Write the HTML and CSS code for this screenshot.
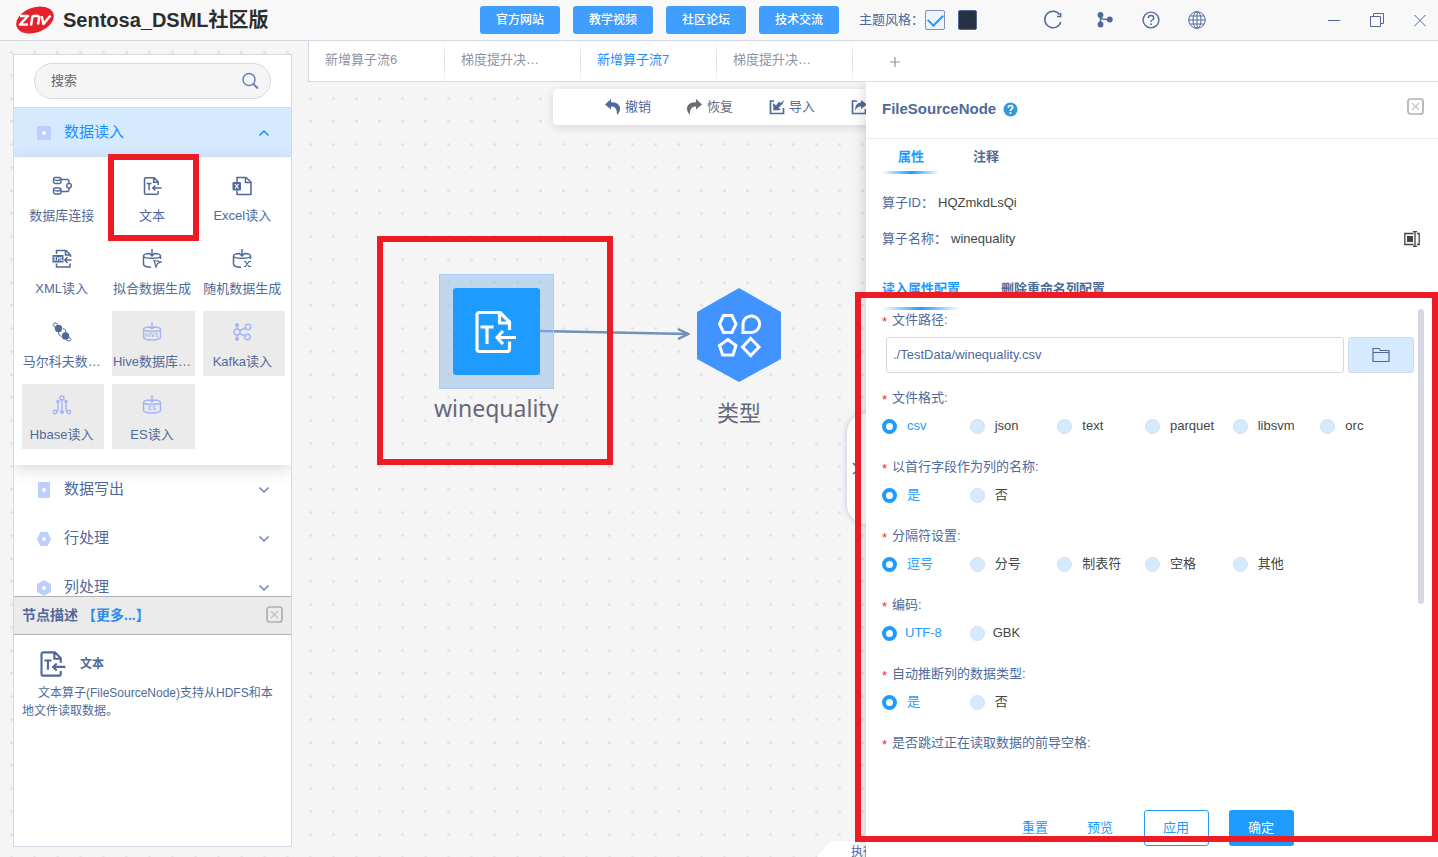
FILE: index.html
```html
<!DOCTYPE html>
<html lang="zh-CN">
<head>
<meta charset="utf-8">
<title>Sentosa_DSML社区版</title>
<link rel="stylesheet" href="styles.css">
</head>
<body>
<svg class="defs" aria-hidden="true">
  <symbol id="file-text" viewBox="0 0 24 24">
    <path d="M19.500 11V7L14.500 2H4.500Q3 2 3 3.500V20.500Q3 22 4.500 22H18Q19.500 22 19.500 20.500V18M14 2V7.500H19.500M5.500 9H11.500M8.500 9V17M23.500 14.500H13M16 11.500L13 14.500L16 17.500" fill="none" stroke="currentColor" stroke-width="1.800"/>
  </symbol>
  <symbol id="chev-down" viewBox="0 0 12 12"><path d="M1.500 3.500L6 8L10.500 3.500" fill="none" stroke="currentColor" stroke-width="1.500"/></symbol>
  <symbol id="box-close" viewBox="0 0 17 17"><rect x="1" y="1" width="15" height="15" rx="2.500" fill="none" stroke="#b0b0b0" stroke-width="1.700"/><path d="M5 5L12 12M12 5L5 12" stroke="#d3bdbd" stroke-width="1.300"/></symbol>
  <symbol id="db" viewBox="0 0 20 20">
    <path d="M8 4.500C4 4.700 1.500 5.800 1.500 7V15C1.500 17 5 18.200 9 18.200M12 4.500C16 4.700 18.500 5.800 18.500 7V10M1.500 7C1.500 10 18.500 10 18.500 7M10 0V6.500M7.500 4.500L10 7L12.500 4.500" fill="none" stroke="currentColor" stroke-width="1.500"/>
  </symbol>
  <symbol id="db-full" viewBox="0 0 20 20">
    <path d="M8 5C4 5.200 1.500 6 1.500 7.500V15C1.500 19 18.500 19 18.500 15V7.500C18.500 6 16 5.200 12 5M1.500 7.500C1.500 10 18.500 10 18.500 7.500M10 0V6.500M7.500 4.500L10 7L12.500 4.500" fill="none" stroke="currentColor" stroke-width="1.500"/>
  </symbol>
</svg>

<header class="topbar">
  <div class="brand">
    <svg class="logo" width="38" height="30" viewBox="0 0 38 30" role="img" aria-label="znv">
      <ellipse cx="19" cy="15" rx="19.500" ry="12.500" transform="rotate(-20 19 15)" fill="#e8202a"/>
      <path d="M4 11H12L4 19.500H12M15 20.500L16.500 11.500Q23.500 9.500 23 13.500L22 19.500M25.500 11L27.500 19L34.500 10.500" fill="none" stroke="#fff" stroke-width="2.500" stroke-linejoin="round"/>
    </svg>
    <h1>Sentosa_DSML社区版</h1>
  </div>
  <nav class="links">
    <button>官方网站</button><button>教学视频</button><button>社区论坛</button><button>技术交流</button>
  </nav>
  <div class="theme">
    <label for="theme-light">主题风格：</label>
    <input type="checkbox" id="theme-light" checked>
    <button class="dark-swatch" aria-label="深色主题"></button>
  </div>
  <div class="tools">
    <button class="refresh" aria-label="刷新"><svg width="20" height="20" viewBox="0 0 20 20"><path d="M17.800 12A8.200 8.200 0 1 1 16.500 4.500M17.700 3V6.500H14" fill="none" stroke="currentColor" stroke-width="1.500"/></svg></button>
    <button aria-label="流程"><svg width="20" height="20" viewBox="0 0 20 20"><g fill="currentColor"><circle cx="5.500" cy="5" r="2.900"/><circle cx="5.500" cy="14.500" r="2.900"/><circle cx="14.800" cy="9.500" r="2.900"/></g><path d="M5.500 5V14M5.500 8C8 10 11 9.500 14 9.500" fill="none" stroke="currentColor" stroke-width="1.500"/></svg></button>
    <button aria-label="帮助"><svg width="20" height="20" viewBox="0 0 20 20"><circle cx="10" cy="10" r="7.900" fill="none" stroke="currentColor" stroke-width="1.400"/><path d="M7.300 8Q7.300 5.500 10 5.500T12.700 8Q12.700 9.200 11.200 10T10 12" fill="none" stroke="currentColor" stroke-width="1.400"/><circle cx="10" cy="14.200" r=".9" fill="currentColor"/></svg></button>
    <button aria-label="语言"><svg width="20" height="20" viewBox="0 0 20 20"><g fill="none" stroke="currentColor"><circle cx="10" cy="10" r="8.300"/><ellipse cx="10" cy="10" rx="4" ry="8.300"/><path d="M10 1.700V18.300M1.700 10H18.300M3 6H17M3 14H17"/></g></svg></button>
  </div>
  <div class="window-controls">
    <button aria-label="最小化"><svg width="14" height="14" viewBox="0 0 14 14"><path d="M1 7.500H13" stroke="currentColor"/></svg></button>
    <button aria-label="还原"><svg width="14" height="14" viewBox="0 0 14 14"><path d="M.5 3.500H10.500V13.500H.5ZM3.500 3V.5H13.500V10.500H11" fill="none" stroke="currentColor"/></svg></button>
    <button aria-label="关闭"><svg width="14" height="14" viewBox="0 0 14 14"><path d="M1.500 2L12.500 13M12.500 2L1.500 13" stroke="currentColor"/></svg></button>
  </div>
</header>

<main class="workspace">
  <aside class="sidebar">
    <div class="operators">
      <div class="search">
        <input type="text" placeholder="搜索" aria-label="搜索">
        <svg width="18" height="18" viewBox="0 0 18 18"><circle cx="8" cy="7.500" r="6" fill="none" stroke="#6d7fb5" stroke-width="1.500"/><path d="M12.500 12L17 16.500" stroke="#6d7fb5" stroke-width="2"/></svg>
      </div>
      <button class="category open">
        <svg class="cat-icon" width="14" height="14" viewBox="0 0 14 14"><rect width="14" height="14" rx="1" fill="#bccdff"/><circle cx="7" cy="7" r="2" fill="#fff"/></svg>
        <span>数据读入</span>
        <svg class="chevron flipped" width="12" height="12"><use href="#chev-down"/></svg>
      </button>
      <div class="operator-grid">
        <button class="operator"><svg width="20" height="20" viewBox="0 0 20 20"><g fill="none" stroke="currentColor" stroke-width="1.400"><rect x="1.500" y="1.500" width="7.500" height="6" rx="2"/><path d="M1.500 3.500Q5 5.500 9 3.500M9 3.500H15Q17 3.500 17 5.500V7M17 12V13.500Q17 15.500 15 15.500H9M1.500 14Q5 16 9 14"/><rect x="1.500" y="12" width="7.500" height="6" rx="2"/><circle cx="17" cy="9.700" r="2.300"/></g></svg><span>数据库连接</span></button>
        <button class="operator"><svg width="20" height="20"><use href="#file-text"/></svg><span>文本</span><i class="mark mark-operator"></i></button>
        <button class="operator"><svg width="20" height="20" viewBox="0 0 20 20"><path d="M5 6V1.500H14L19 6V18.500H5V14.500M13.500 1.500V6.500H19" fill="none" stroke="currentColor" stroke-width="1.500"/><rect x=".5" y="6" width="8.500" height="8.500" rx="1" fill="currentColor"/><path d="M3 8L6.500 12.500M6.500 8L3 12.500" stroke="#fff" stroke-width="1.200"/></svg><span>Excel读入</span></button>
        <button class="operator"><svg width="20" height="20" viewBox="0 0 20 20"><path d="M4.500 5V1.500H14L18.500 6V8M13.500 1.500V6H18M4.500 14.500V18H18V14.500M19.500 11H13M15.500 8L12.800 11L15.500 14" fill="none" stroke="currentColor" stroke-width="1.500"/><rect x=".5" y="6" width="11" height="7.500" fill="currentColor"/><path d="M2 7.500L4 12M4 7.500L2 12M5.500 12V8L6.700 10L8 8V12M9.300 7.500V11.500H11" stroke="#fff" stroke-width=".8" fill="none"/></svg><span>XML读入</span></button>
        <button class="operator"><svg width="20" height="20" viewBox="0 0 20 20"><use href="#db"/><path d="M12 11.500L19 13L15.500 14.500L14 18Z" fill="none" stroke="currentColor" stroke-width="1.200"/></svg><span>拟合数据生成</span></button>
        <button class="operator"><svg width="20" height="20" viewBox="0 0 20 20"><use href="#db"/><path d="M12 12.500H13.500L17 17.500H19M12 17.500H13.500L17 12.500H19" fill="none" stroke="currentColor" stroke-width="1.200"/></svg><span>随机数据生成</span></button>
        <button class="operator"><svg width="20" height="20" viewBox="0 0 20 20"><circle cx="6.500" cy="6.500" r="3.700" fill="currentColor"/><circle cx="13.500" cy="14" r="3.700" fill="currentColor"/><path d="M3 5.500L1 2.500Q1.500 .5 4 1L6 2.500M17 15L19 17.500Q18.500 19.500 16 19L14 17.500M11 6.500Q14.500 7 13.500 11M6.500 10Q6 13.500 9.500 14.500" fill="none" stroke="currentColor" stroke-width="1"/></svg><span>马尔科夫数…</span></button>
        <button class="operator locked"><svg width="20" height="20" viewBox="0 0 20 20"><use href="#db-full"/><path d="M3.500 11V15M6 11V15M3.500 13H6M8 11V15M9.500 11L11 15L12.500 11M16.500 11H14.200V15H16.500M14.200 13H16" fill="none" stroke="currentColor" stroke-width=".9"/></svg><span>Hive数据库…</span></button>
        <button class="operator locked"><svg width="20" height="20" viewBox="0 0 20 20"><g fill="none" stroke="currentColor" stroke-width="1.500"><circle cx="5" cy="10" r="3"/><circle cx="16" cy="5" r="2.700"/><circle cx="15.500" cy="15" r="2.700"/><path d="M7.500 8.500L13.500 6M7.500 11.500L13 14M5 3V7M5 13V17"/></g><circle cx="5" cy="3" r="2" fill="currentColor"/><circle cx="5" cy="17" r="2" fill="currentColor"/></svg><span>Kafka读入</span></button>
        <button class="operator locked"><svg width="20" height="20" viewBox="0 0 20 20"><g fill="none" stroke="currentColor" stroke-width="1.400"><circle cx="10" cy="3" r="2"/><circle cx="3" cy="17" r="1.700"/><circle cx="17" cy="17" r="1.700"/><path d="M10 5V16M5 17Q6 16 6 14V7M15 17Q14 16 14 14V7"/></g><g fill="currentColor"><circle cx="6" cy="6.500" r="1.800"/><circle cx="14" cy="6.500" r="1.800"/><circle cx="10" cy="17" r="2"/></g></svg><span>Hbase读入</span></button>
        <button class="operator locked"><svg width="20" height="20" viewBox="0 0 20 20"><use href="#db-full"/><path d="M9.500 11.500H7V15H9.500M7 13.200H9M13.500 11.500H11.200V13.200H13.300V15H11" fill="none" stroke="currentColor" stroke-width=".9"/></svg><span>ES读入</span></button>
      </div>
      <div class="categories">
        <button class="category"><svg class="cat-icon" width="14" height="16" viewBox="0 0 14 16"><rect x="1" width="12" height="16" rx="1" fill="#bccdff"/><circle cx="7" cy="8" r="2" fill="#fff"/></svg><span>数据写出</span><svg class="chevron" width="12" height="12"><use href="#chev-down"/></svg></button>
        <button class="category"><svg class="cat-icon" width="14" height="14" viewBox="0 0 14 14"><path d="M3.500 0H10.500L14 7L10.500 14H3.500L0 7Z" fill="#bccdff"/><circle cx="7" cy="7" r="2" fill="#fff"/></svg><span>行处理</span><svg class="chevron" width="12" height="12"><use href="#chev-down"/></svg></button>
        <button class="category"><svg class="cat-icon" width="14" height="16" viewBox="0 0 14 16"><path d="M7 0L14 4V12L7 16L0 12V4Z" fill="#bccdff"/><circle cx="7" cy="8" r="2" fill="#fff"/></svg><span>列处理</span><svg class="chevron" width="12" height="12"><use href="#chev-down"/></svg></button>
      </div>
    </div>
    <section class="description">
      <header class="description-head">
        <h2>节点描述</h2><a href="#">【更多...】</a>
        <button aria-label="关闭描述"><svg width="17" height="17"><use href="#box-close"/></svg></button>
      </header>
      <div class="description-body">
        <h3><svg width="28" height="28"><use href="#file-text"/></svg>文本</h3>
        <p>文本算子(FileSourceNode)支持从HDFS和本地文件读取数据。</p>
      </div>
    </section>
  </aside>

  <section class="stage">
    <div class="flow-tabs">
      <button>新增算子流6</button>
      <button>梯度提升决…</button>
      <button class="current">新增算子流7</button>
      <button>梯度提升决…</button>
      <button class="add" aria-label="新增"><svg width="12" height="12" viewBox="0 0 12 12"><path d="M6 1V11M1 6H11" stroke="currentColor" stroke-width="1.200"/></svg></button>
    </div>
    <div class="canvas">
      <div class="toolbar">
        <button><svg width="16" height="16" viewBox="0 0 16 16"><path d="M6 0L0 5.500L6 10.500V7.500Q12.500 7 12 16Q15.500 12.500 15 8.500Q13.500 3 6 3.200Z" fill="currentColor"/></svg>撤销</button>
        <button class="muted"><svg width="16" height="16" viewBox="0 0 16 16"><path d="M9 0L15 5.500L9 10.500V7.500Q2.500 7 3 16Q-.5 12.500 0 8.500Q1.500 3 9 3.200Z" fill="currentColor"/></svg>恢复</button>
        <button><svg width="16" height="16" viewBox="0 0 16 16"><path d="M5 2H1.500V14.500H14.500V9" fill="none" stroke="currentColor" stroke-width="1.700"/><path d="M4 4L4.500 11.500L12 11L9.500 9Q14 5.500 15.500 1L11.500 4L10 2.500L7 6.500Z" fill="currentColor"/></svg>导入</button>
        <button aria-label="导出"><svg width="16" height="16" viewBox="0 0 16 16"><path d="M6 2H1.500V14.500H14.500V10" fill="none" stroke="currentColor" stroke-width="1.700"/><path d="M10 1L16 5.500L10 10V7.500Q6 7 4 12Q3.500 4 10 3.500Z" fill="currentColor"/></svg></button>
      </div>
      <svg class="edge" width="150" height="13" viewBox="0 0 150 13"><path d="M0 4L148 7" stroke="#6f91ba" stroke-width="2.500" fill="none"/><path d="M138 2L148 7L138 12" stroke="#6f91ba" stroke-width="2.500" fill="none"/></svg>
      <figure class="node node-source">
        <div class="selection"><div class="tile"><svg width="50" height="50" viewBox="0 0 50 50"><path d="M38.500 23V15L29 5.500H8.500Q6 5.500 6 8V42Q6 44.500 8.500 44.500H36Q38.500 44.500 38.500 42V34.500M28.500 6V16H38.500M9.500 20H22.500M16 20V37M45 30.500H26M32 24L26 30.500L32 37" fill="none" stroke="#fff" stroke-width="3.200" stroke-linejoin="round"/></svg></div></div>
        <figcaption>winequality</figcaption>
      </figure>
      <figure class="node node-type">
        <svg width="84" height="94" viewBox="0 0 84 94"><path d="M42 0L84 24V71L42 94L0 71V24Z" fill="#4194ff"/><g fill="none" stroke="#fff" stroke-width="3"><path d="M26.500 27.500H35L39 36L35 44.500H26.500L22.500 36ZM46 44.500V36A8.300 8.300 0 1 1 54 44.500ZM30.800 51.500L39 57.500L36 67H25.700L22.500 57.500ZM53.700 50.500L62 59L53.700 67.500L45.500 59Z"/></g></svg>
        <figcaption>类型</figcaption>
      </figure>
      <i class="mark mark-node"></i>
      <button class="panel-handle" aria-label="收起"><svg width="12" height="16" viewBox="0 0 12 16"><path d="M2 2L8 8L2 13" fill="none" stroke="#4f6a9a" stroke-width="1.500"/></svg></button>
      <button class="run-tab">执行</button>
    </div>
  </section>

  <aside class="drawer">
    <header class="drawer-head">
      <h2>FileSourceNode</h2>
      <svg width="15" height="15" viewBox="0 0 15 15"><circle cx="7.500" cy="7.500" r="7" fill="#3498dd"/><path d="M5.300 5.800Q5.300 3.500 7.500 3.500T9.700 5.600Q9.700 6.800 8.300 7.300Q7.500 7.700 7.500 9" fill="none" stroke="#fff" stroke-width="1.700"/><circle cx="7.500" cy="11" r="1" fill="#fff"/></svg>
      <button aria-label="关闭"><svg width="17" height="17"><use href="#box-close"/></svg></button>
    </header>
    <div class="drawer-tabs"><button class="current">属性</button><button>注释</button></div>
    <dl class="info">
      <div><dt>算子ID：</dt><dd>HQZmkdLsQi</dd></div>
      <div><dt>算子名称：</dt><dd>winequality</dd><button aria-label="重命名"><svg width="16" height="16" viewBox="0 0 16 16"><path d="M9.500 2.500H.8V13.500H9.500M13 2.500H15.200V13.500H13M9 .7H13M9 15.300H13M11 .7V15.300" fill="none" stroke="#444" stroke-width="1.300"/><rect x="3" y="5" width="6" height="6" fill="#444"/></svg></button></div>
    </dl>
    <div class="config-tabs"><button class="current">读入属性配置</button><button>删除重命名列配置</button></div>
    <form class="config">
      <div class="path-field">
        <label class="required" for="path">文件路径:</label>
        <div class="path-row">
          <input id="path" type="text" value="./TestData/winequality.csv">
          <button type="button" aria-label="浏览"><svg width="18" height="16" viewBox="0 0 18 16"><path d="M1 14.500V1.500H7L8.500 3.500H17V14.500ZM1 5.500H17" fill="none" stroke="#4f6a9a" stroke-width="1.200"/></svg></button>
        </div>
      </div>
      <fieldset><legend class="required">文件格式:</legend><div class="options">
        <label><input type="radio" name="format" checked><span>csv</span></label><label><input type="radio" name="format"><span>json</span></label><label><input type="radio" name="format"><span>text</span></label><label><input type="radio" name="format"><span>parquet</span></label><label><input type="radio" name="format"><span>libsvm</span></label><label><input type="radio" name="format"><span>orc</span></label>
      </div></fieldset>
      <fieldset><legend class="required">以首行字段作为列的名称:</legend><div class="options">
        <label><input type="radio" name="header" checked><span>是</span></label><label><input type="radio" name="header"><span>否</span></label>
      </div></fieldset>
      <fieldset><legend class="required">分隔符设置:</legend><div class="options">
        <label><input type="radio" name="sep" checked><span>逗号</span></label><label><input type="radio" name="sep"><span>分号</span></label><label><input type="radio" name="sep"><span>制表符</span></label><label><input type="radio" name="sep"><span>空格</span></label><label><input type="radio" name="sep"><span>其他</span></label>
      </div></fieldset>
      <fieldset><legend class="required">编码:</legend><div class="options compact">
        <label><input type="radio" name="enc" checked><span>UTF-8</span></label><label><input type="radio" name="enc"><span>GBK</span></label>
      </div></fieldset>
      <fieldset><legend class="required">自动推断列的数据类型:</legend><div class="options">
        <label><input type="radio" name="infer" checked><span>是</span></label><label><input type="radio" name="infer"><span>否</span></label>
      </div></fieldset>
      <fieldset><legend class="required">是否跳过正在读取数据的前导空格:</legend></fieldset>
    </form>
    <footer class="drawer-foot">
      <button class="text">重置</button><button class="text">预览</button><button class="outline">应用</button><button class="solid">确定</button>
    </footer>
    <i class="scroll-thumb"></i>
    <i class="mark mark-drawer"></i>
  </aside>
</main>
</body>
</html>
```
FILE: styles.css
```css
* { box-sizing: border-box; margin: 0; padding: 0; }
html, body { height: 100%; }
body {
  display: flex;
  flex-direction: column;
  overflow: hidden;
  background: #f5f5f5;
  color: #4f6a9a;
  font: 13px/18px "Liberation Sans", "Noto Sans CJK SC", sans-serif;
}
button, input { font: inherit; color: inherit; }
button { border: 0; background: none; white-space: nowrap; }
svg { display: block; flex: none; }
fieldset { border: 0; min-width: 0; }
.defs { position: absolute; width: 0; height: 0; }
.mark { position: absolute; border: 6px solid #ed1c24; pointer-events: none; z-index: 5; }

/* top bar */
.topbar {
  flex: none;
  display: flex;
  align-items: center;
  height: 41px;
  padding: 0 11px 0 16px;
  background: #f8f8f8;
  border-bottom: 1px solid #d5d8e3;
}
.brand { display: flex; align-items: center; gap: 9px; }
.brand h1 { font-size: 20px; line-height: 28px; color: #2d2d2d; }
.links { display: flex; gap: 13px; margin-left: auto; }
.links button {
  width: 80px;
  height: 28px;
  border-radius: 3px;
  background: #409eff;
  color: #fff;
  font-size: 12px;
  font-weight: 500;
}
.theme { display: flex; align-items: center; margin-left: 20px; }
.theme label { margin-right: 1px; }
.theme input {
  appearance: none;
  width: 20px;
  height: 20px;
  border: 1px solid #8391b5;
  border-radius: 2px;
  background: #eef2fb;
  display: grid;
  place-items: center;
}
.theme input::before {
  content: "";
  width: 13px;
  height: 7px;
  margin-bottom: 4px;
  border: solid #1e9bff;
  border-width: 0 0 2px 2px;
  rotate: -45deg;
}
.dark-swatch { width: 19px; height: 20px; margin-left: 13px; border: 1px solid #4f6a9a; border-radius: 2px; background: #283143; }
.tools { display: flex; gap: 26px; margin-left: 66px; }
.refresh { margin-right: 6px; }
.window-controls { display: flex; gap: 29px; margin-left: 120px; }

/* workspace */
.workspace {
  position: relative;
  flex: 1;
  min-height: 0;
  display: flex;
  background: radial-gradient(circle, #e3e3e3 1px, transparent 2px) 0 0 / 23px 23px;
}
.sidebar {
  flex: none;
  display: flex;
  flex-direction: column;
  width: 279px;
  margin: 13px 16px 10px 13px;
  border: 1px solid #d5d8e3;
  background: #fff;
}
.operators { flex: 1; min-height: 0; overflow: hidden; }
.search {
  display: flex;
  align-items: center;
  height: 36px;
  margin: 8px 20px;
  padding: 0 11px 0 16px;
  border: 1px solid #d5d8e3;
  border-radius: 18px;
  background: #f5f5f5;
}
.search input { flex: 1; min-width: 0; border: 0; outline: 0; background: none; }
.search input::placeholder { color: #666; opacity: 1; }
.category {
  display: flex;
  align-items: center;
  width: 100%;
  height: 49px;
  padding: 0 21px 0 23px;
  font-size: 15px;
  text-align: left;
}
.category span { flex: 1; padding: 0 0 2px 13px; }
.category.open { height: 50px; border-top: 1px solid #d5d8e3; background: #d6eaff; color: #1890ff; }
.cat-icon { width: 14px; }
.chevron { color: #6b82b0; }
.open .chevron { color: #1890ff; }
.flipped { rotate: 180deg; }
.operator-grid {
  position: relative;
  display: grid;
  grid-template-columns: repeat(3, 1fr);
  grid-auto-rows: 65px;
  gap: 8px;
  padding: 8px 6px 16px 8px;
  background: #fff;
  box-shadow: 0 4px 16px #00000026;
}
.operator { position: relative; display: flex; flex-direction: column; align-items: center; gap: 11px; padding: 11px 3px 0 0; min-width: 0; }
.locked { background: #ebebeb; }
.locked svg { color: #a5b4f8; }
.mark-operator { inset: -11px -4px; }
.description { flex: none; height: 250px; border-top: 1px solid #b0b0b0; background: #fff; }
.description-head {
  display: flex;
  align-items: center;
  height: 38px;
  padding: 0 8px 2px;
  background: #ebebeb;
  border-bottom: 1px solid #b0b0b0;
  font-size: 14px;
}
.description-head h2 { font-size: 14px; }
.description-head a { margin-left: 4px; color: #2d8cf0; font-size: 14px; font-weight: bold; text-decoration: none; }
.description-head button { margin-left: auto; }
.description-body { padding: 15px 8px; font-size: 12px; }
.description-body h3 { display: flex; align-items: center; gap: 14px; padding-left: 16px; font-size: 12px; }
.description-body p { margin-top: 6px; text-indent: 16px; }

/* flow tabs and canvas */
.stage { flex: 1; min-width: 0; display: flex; flex-direction: column; }
.flow-tabs { flex: none; display: flex; height: 41px; background: #fff; border: solid #d5d8e3; border-width: 0 0 1px 1px; }
.flow-tabs button {
  width: 136px;
  padding: 0 0 3px 16px;
  border-right: 1px solid;
  border-image: linear-gradient(#fff, #d5d8e3, #fff) 1;
  text-align: left;
  color: #8d93a6;
}
.flow-tabs .current { color: #1890ff; }
.flow-tabs .add { width: 82px; padding: 2px 0 0 36px; border: 0; }
.canvas { position: relative; flex: 1; min-height: 0; overflow: hidden; }
.toolbar {
  display: flex;
  gap: 34px;
  height: 36px;
  margin: 7px 0 0 245px;
  padding: 0 52px;
  border-radius: 4px;
  background: #fff;
  box-shadow: 0 2px 10px #0000001f;
}
.toolbar button { display: flex; align-items: center; gap: 4px; width: 48px; padding-bottom: 1px; }
.toolbar .muted { color: #6b6b78; }
.edge { position: absolute; left: 232px; top: 245px; }
.node { position: absolute; display: flex; flex-direction: column; align-items: center; color: #666879; font: 24px/32px "Noto Sans", "Noto Sans CJK SC", sans-serif; }
.node-source { left: 126px; top: 192px; }
.selection { padding: 13px; border: 1px solid #abcbfa; background: #8db9e880; }
.tile { display: grid; place-items: center; width: 87px; height: 87px; border-radius: 3px; background: #1e9bff; }
.node-source figcaption { margin-top: 3px; font-size: 23px; }
.node-type { left: 389px; top: 206px; }
.node-type figcaption { margin-top: 14px; font-size: 22px; }
.mark-node { left: 69px; top: 154px; width: 236px; height: 229px; }
.panel-handle { position: absolute; left: 539px; top: 331px; width: 40px; height: 111px; padding-left: 4px; border-radius: 20px; background: #fff; box-shadow: 0 0 6px #7382b466; }
.run-tab {
  position: absolute;
  left: 509px;
  bottom: 0;
  height: 16px;
  padding: 2px 20px 0 34px;
  background: #fff;
  clip-path: polygon(0 100%, 14px 0, 100% 0, 100% 100%);
  font-size: 12px;
}

/* drawer */
.drawer {
  position: absolute;
  top: 41px;
  right: 0;
  bottom: 0;
  width: 572px;
  display: flex;
  flex-direction: column;
  background: #fff;
  box-shadow: -2px 4px 12px #00000026;
  clip-path: inset(0 0 0 -16px);
}
.drawer-head { display: flex; align-items: center; gap: 7px; height: 57px; padding: 0 14px 2px 16px; border-bottom: 1px solid #ececf0; }
.drawer-head h2 { font-size: 15px; }
.drawer-head button { margin-left: auto; padding-bottom: 6px; }
.drawer-tabs, .config-tabs { display: flex; padding-left: 16px; font-weight: bold; }
.drawer-tabs { gap: 17px; height: 35px; }
.drawer-tabs button { padding: 0 16px; }
.config-tabs { gap: 41px; height: 42px; margin-top: 11px; }
.drawer-tabs .current, .config-tabs .current {
  color: #1e9bff;
  background: linear-gradient(90deg, transparent, #1e9bff, transparent) bottom / 100% 3px no-repeat;
}
.info { margin-top: 11px; }
.info div { display: flex; align-items: center; height: 36px; padding: 0 18px 0 16px; }
.info dd { margin-left: 4px; color: #444; }
.info button { margin-left: auto; }
.config { flex: 1; min-height: 0; overflow: hidden; padding: 1px 24px 0 16px; }
.required { display: block; height: 18px; }
.required::before { content: "*"; margin-right: 5px; color: #f5222d; vertical-align: -2px; line-height: 1; }
.path-field { margin-bottom: 16px; }
.path-row { display: flex; gap: 4px; margin: 8px 0 0 4px; }
.path-row input { flex: 1; height: 36px; padding: 0 6px 2px; border: 1px solid #d5d8e3; border-radius: 3px; background: #fff; }
.path-row button { display: grid; place-items: center; width: 66px; border: 1px solid #d5d8e3; border-radius: 3px; background: #d6eaff; }
.options { display: grid; grid-template-columns: repeat(6, 1fr); height: 20px; margin: 9px 6px 22px 0; }
.options label { display: flex; align-items: center; gap: 10px; white-space: nowrap; color: #444; }
.options.compact label { gap: 8px; }
.options input { appearance: none; flex: none; width: 15px; height: 15px; border: 1px solid #d5dff0; border-radius: 50%; background: #d6eaff; }
.options input:checked { border: 4px solid #1e9bff; background: #fff; }
.options input:checked + span { color: #1e9bff; }
.drawer-foot { flex: none; display: flex; justify-content: center; padding: 12px 8px 11px 0; color: #1e9bff; }
.drawer-foot button { width: 65px; height: 36px; border-radius: 3px; }
.drawer-foot .outline { margin: 0 20px 0 11px; border: 1px solid #1e9bff; background: #fff; }
.drawer-foot .solid { background: #1e9bff; color: #fff; }
.scroll-thumb { position: absolute; top: 227px; right: 14px; width: 6px; height: 295px; border-radius: 3px; background: #d5d8e3; }
.mark-drawer { inset: 210px 0 15px -11px; }
```
